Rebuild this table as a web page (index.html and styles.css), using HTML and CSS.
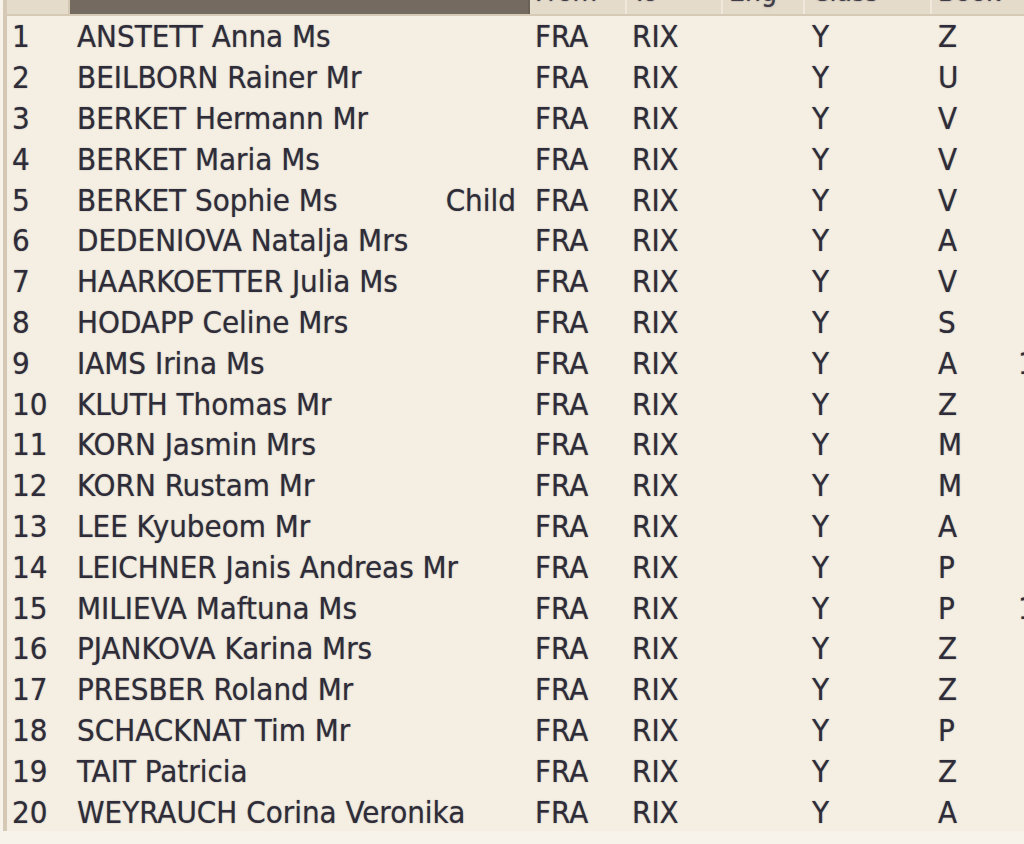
FILE: index.html
```html
<!DOCTYPE html>
<html>
<head>
<meta charset="utf-8">
<link rel="stylesheet" href="styles.css">
</head>
<body>
<div class="frame">
  <div class="grid">
    <div class="hrow">
      <div class="h c-num"></div>
      <div class="h c-name sel"></div>
      <div class="h c-from"><span>From</span></div>
      <div class="h c-to"><span>To</span></div>
      <div class="h c-eng"><span>Eng</span></div>
      <div class="h c-cls"><span>Class</span></div>
      <div class="h c-bkg"><span>Book</span></div>
      <div class="h c-x"><span>S</span></div>
    </div>
    <div class="rows" id="rows"></div>
  </div>
</div>
<script src="app.js"></script>
</body>
</html>
```

FILE: app.js
```js
const data = [
  ["ANSTETT Anna Ms","","Z",""],
  ["BEILBORN Rainer Mr","","U",""],
  ["BERKET Hermann Mr","","V",""],
  ["BERKET Maria Ms","","V",""],
  ["BERKET Sophie Ms","Child","V",""],
  ["DEDENIOVA Natalja Mrs","","A",""],
  ["HAARKOETTER Julia Ms","","V",""],
  ["HODAPP Celine Mrs","","S",""],
  ["IAMS Irina Ms","","A","1"],
  ["KLUTH Thomas Mr","","Z",""],
  ["KORN Jasmin Mrs","","M",""],
  ["KORN Rustam Mr","","M",""],
  ["LEE Kyubeom Mr","","A",""],
  ["LEICHNER Janis Andreas Mr","","P",""],
  ["MILIEVA Maftuna Ms","","P","1"],
  ["PJANKOVA Karina Mrs","","Z",""],
  ["PRESBER Roland Mr","","Z",""],
  ["SCHACKNAT Tim Mr","","P",""],
  ["TAIT Patricia","","Z",""],
  ["WEYRAUCH Corina Veronika","","A",""]
];
const rows = document.getElementById("rows");
data.forEach((d, i) => {
  const r = document.createElement("div");
  r.className = "row";
  r.innerHTML =
    `<div class="c c-num">${i + 1}</div>` +
    `<div class="c c-name"><span class="nm">${d[0]}</span><span class="note">${d[1]}</span></div>` +
    `<div class="c c-from">FRA</div>` +
    `<div class="c c-to">RIX</div>` +
    `<div class="c c-eng"></div>` +
    `<div class="c c-cls">Y</div>` +
    `<div class="c c-bkg">${d[2]}</div>` +
    `<div class="c c-x">${d[3]}</div>`;
  rows.appendChild(r);
});
```

FILE: styles.css
```css
html, body {
  margin: 0;
  padding: 0;
  background: #f8f3ea;
  width: 1024px;
  height: 844px;
  overflow: hidden;
}
.frame {
  margin-left: 3px;
  border-left: 4px solid #d5c8b4;
  background: #f5efe3;
  height: 831px;
}
.grid {
  font-family: "DejaVu Sans Condensed", "DejaVu Sans", sans-serif;
  font-stretch: condensed;
  font-size: 31px;
  color: #2e2c38;
}
.hrow {
  display: flex;
  height: 14px;
  border-bottom: 2px solid #d6cab7;
  overflow: hidden;
}
.h {
  box-sizing: border-box;
  background: #e5dbca;
  border-right: 2px solid #f0e8da;
  display: flex;
  align-items: flex-end;
  overflow: hidden;
  padding-left: 6px;
  color: #403c48;
}
.h span {
  line-height: 1;
  margin-bottom: 8px;
  font-size: 28px;
  text-shadow: 0 0 1.5px rgba(64, 60, 72, 0.7);
}
.h.sel {
  background: #746a5f;
  border-right: 2px solid #6a6157;
}
.h.c-num { border-right: 2px solid #d4c8b4; }
.row {
  display: flex;
  height: 40.8px;
  align-items: center;
  text-shadow: 0 0 1.2px rgba(46, 44, 56, 0.55);
}
.c {
  box-sizing: border-box;
  white-space: nowrap;
  overflow: hidden;
}
.c-num { width: 63px; padding-left: 5px; flex: none; }
.c-name { width: 460px; padding-left: 7px; flex: none; display: flex; padding-right: 14px; }
.c-name .nm { flex: 1; }
.c-from { width: 97px; padding-left: 5px; flex: none; }
.c-to { width: 96px; padding-left: 5px; flex: none; }
.c-eng { width: 82px; flex: none; }
.c-cls { width: 127px; padding-left: 7px; flex: none; }
.c-bkg { width: 88px; padding-left: 6px; flex: none; }
.c-x { flex: 1; margin-left: -2px; }
```
